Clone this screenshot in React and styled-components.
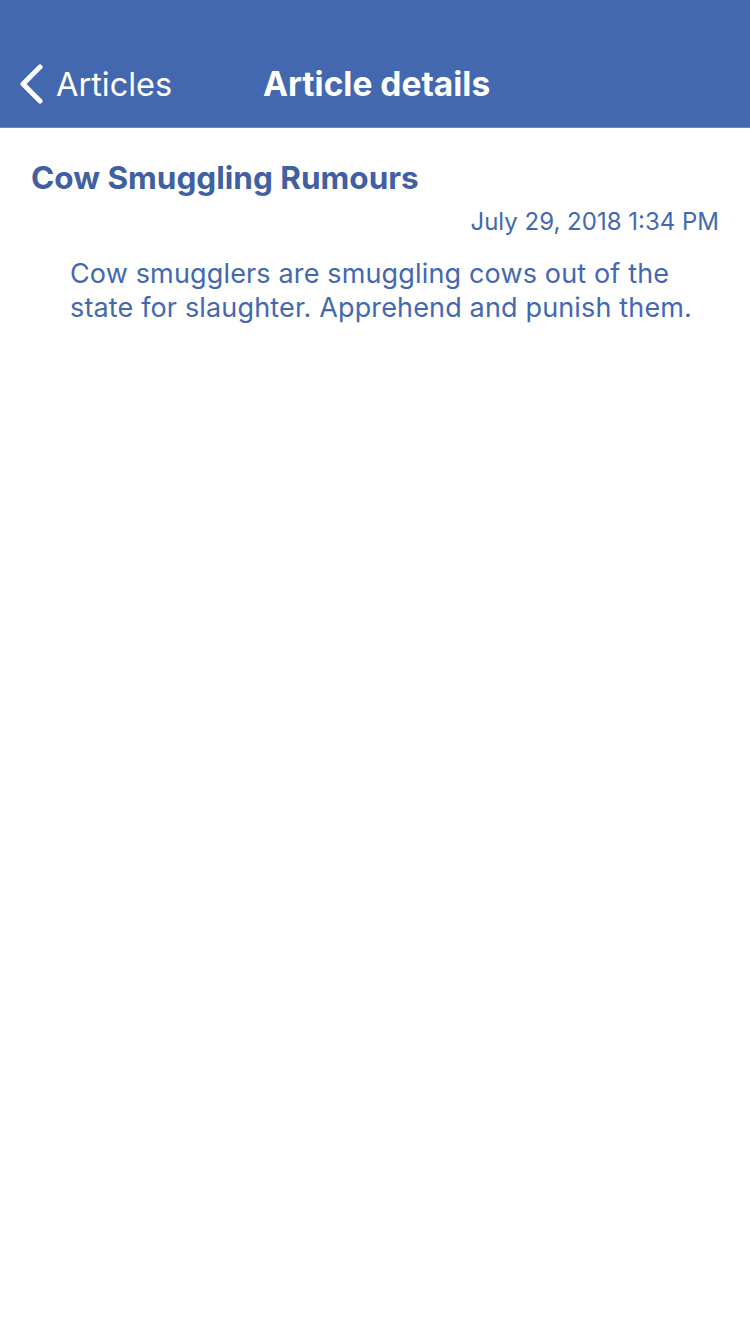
import styled, { createGlobalStyle } from "styled-components";

const GlobalStyle = createGlobalStyle`
  body {
    margin: 0;
    background: #fff;
    font-family: Inter, Roboto, "Liberation Sans", sans-serif;
  }
`;

const Header = styled.header`
  box-sizing: border-box;
  height: 128px;
  background-color: #4468af;
  border-bottom: 1px solid #6a87c0;
  display: flex;
  align-items: flex-end;
  padding: 0 0 23px 18px;
  color: #fff;
`;

const Back = styled.div`
  display: flex;
  align-items: center;
  gap: 12px;
  font-size: 32.5px;
  width: 245px;
  svg {
    display: block;
  }
`;

const Title = styled.h1`
  margin: 0;
  font-size: 33.5px;
  font-weight: bold;
`;

const Content = styled.div`
  padding: 30px 31px 0 31px;
  color: #4468af;
`;

const Heading = styled.h2`
  margin: 0;
  font-size: 31.5px;
  font-weight: bold;
  color: #3f60a3;
`;

const Date = styled.div`
  text-align: right;
  font-size: 24px;
  margin: 10px 0 0;
`;

const Body = styled.p`
  margin: 21px 0 0 39px;
  font-size: 27px;
  line-height: 34px;
  letter-spacing: 0.15px;
`;

export default function App() {
  return (
    <>
      <GlobalStyle />
      <Header>
        <Back>
          <svg width="26" height="40" viewBox="0 0 26 40">
            <path
              d="M22 3 L5 20 L22 37"
              fill="none"
              stroke="#fff"
              strokeWidth="5"
              strokeLinecap="round"
              strokeLinejoin="round"
            />
          </svg>
          Articles
        </Back>
        <Title>Article details</Title>
      </Header>
      <Content>
        <Heading>Cow Smuggling Rumours</Heading>
        <Date>July 29, 2018 1:34 PM</Date>
        <Body>
          Cow smugglers are smuggling cows out of the state for slaughter.
          Apprehend and punish them.
        </Body>
      </Content>
    </>
  );
}
